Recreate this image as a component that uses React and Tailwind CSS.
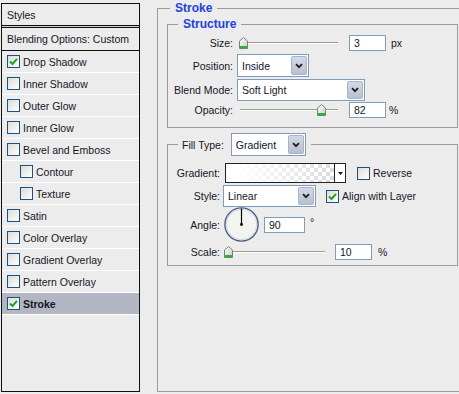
import React from 'react';

const styleItems = [
  { label: 'Drop Shadow', checked: true },
  { label: 'Inner Shadow' },
  { label: 'Outer Glow' },
  { label: 'Inner Glow' },
  { label: 'Bevel and Emboss' },
  { label: 'Contour', indent: true },
  { label: 'Texture', indent: true },
  { label: 'Satin' },
  { label: 'Color Overlay' },
  { label: 'Gradient Overlay' },
  { label: 'Pattern Overlay' },
  { label: 'Stroke', checked: true, active: true },
];

const CheckBox = ({ checked }) => (
  <span className="flex h-[13px] w-[13px] shrink-0 items-center justify-center border border-[#1c5180] bg-gradient-to-br from-[#dcdcd7] to-white">
    {checked && (
      <svg width="9" height="9" viewBox="0 0 9 9">
        <path d="M1 4.5 L3.5 7 L8 1.8" fill="none" stroke="#21a121" strokeWidth="2" />
      </svg>
    )}
  </span>
);

const DropButton = () => (
  <span className="my-[1px] mr-[1px] flex w-[16px] shrink-0 items-center justify-center rounded-[2px] bg-gradient-to-b from-[#d3d9e6] to-[#b7bfd2] border border-[#a9b3c9]">
    <svg width="8" height="6" viewBox="0 0 8 6">
      <path d="M1 1.2 L4 4.2 L7 1.2" fill="none" stroke="#1e1e1e" strokeWidth="1.8" />
    </svg>
  </span>
);

const Select = ({ value, className }) => (
  <div className={`flex border border-[#7f9db9] bg-white ${className}`}>
    <span className="flex flex-1 items-center pl-[4px]">{value}</span>
    <DropButton />
  </div>
);

const TextBox = ({ value, className }) => (
  <div className={`flex h-[16px] items-center border border-[#7f9db9] bg-white pl-[4px] ${className}`}>
    {value}
  </div>
);

const Slider = ({ pos, className }) => (
  <div className={`relative flex h-[16px] items-center ${className}`}>
    <div className="h-[2px] w-full border-t border-[#9b9b8e] bg-white" />
    <svg className="absolute top-[2px]" style={{ left: pos }} width="9" height="12" viewBox="0 0 9 12">
      <defs>
        <linearGradient id="thumb" x1="0" y1="0" x2="1" y2="1">
          <stop offset="0" stopColor="#ffffff" />
          <stop offset="1" stopColor="#c9ccc4" />
        </linearGradient>
      </defs>
      <path d="M0.5 4 L4.5 0.5 L8.5 4 L8.5 11.5 L0.5 11.5 Z" fill="url(#thumb)" stroke="#7c8078" />
      <rect x="1" y="9" width="7" height="2.5" fill="#2fae3a" />
    </svg>
  </div>
);

const Dial = () => (
  <svg width="35" height="35" viewBox="0 0 35 35">
    <circle cx="17.5" cy="17.5" r="16.6" fill="#f3f3ef" stroke="#4d5f88" strokeWidth="1.4" />
    <circle cx="17.5" cy="17.5" r="15.2" fill="none" stroke="#d2d7e0" strokeWidth="1" />
    <line x1="17.5" y1="17.5" x2="17.5" y2="1.5" stroke="#000" strokeWidth="1.2" />
    <circle cx="17.5" cy="17.5" r="1.4" fill="#000" />
  </svg>
);

const App = () => {
  return (
    <div className="flex h-[394px] w-[459px] overflow-hidden bg-[#ececec] font-['Liberation_Sans',Arial,sans-serif] text-[10.5px] leading-[12px] text-[#161626]">
      {/* Styles list */}
      <div className="ml-[1px] mt-[3px] flex h-[389px] w-[139px] shrink-0 flex-col border border-[#111]">
        <div className="flex h-[21px] items-center pl-[5px]">Styles</div>
        <div className="h-[3px] border-y border-[#111] bg-[#cfcfcf]" />
        <div className="flex h-[23px] items-center border-b border-[#111] pl-[5px]">
          Blending Options: Custom
        </div>
        {styleItems.map((item) => (
          <div
            key={item.label}
            className={`flex h-[22px] items-center gap-[3px] border-b border-white ${
              item.indent ? 'pl-[18px]' : 'pl-[5px]'
            } ${item.active ? 'bg-[#b3b6c3] font-bold' : ''}`}
          >
            <CheckBox checked={item.checked} />
            <span>{item.label}</span>
          </div>
        ))}
      </div>

      {/* Stroke settings */}
      <fieldset className="ml-[17px] mt-[2px] h-[390px] w-[302px] shrink-0 border border-r-0 border-[#9c9c9c]">
        <legend className="ml-[12px] px-[5px] text-[12px] font-bold leading-[12px] text-[#2340e0]">Stroke</legend>
        <div className="pl-[9px]">
          {/* Structure */}
          <fieldset className="mt-[4px] w-[291px] border border-[#9c9c9c] pb-[9px]">
            <legend className="ml-[10px] px-[5px] text-[12px] font-bold leading-[12px] text-[#2340e0]">Structure</legend>

            <div className="mt-[5px] flex h-[16px] items-center">
              <span className="w-[65px] text-right">Size:</span>
              <Slider pos="-1px" className="ml-[7px] w-[98px]" />
              <TextBox value="3" className="ml-[11px] w-[37px]" />
              <span className="ml-[5px]">px</span>
            </div>

            <div className="mt-[3px] flex h-[23px] items-center">
              <span className="w-[65px] text-right">Position:</span>
              <Select value="Inside" className="ml-[4px] h-[23px] w-[72px]" />
            </div>

            <div className="mt-[2px] flex h-[22px] items-center">
              <span className="w-[65px] text-right">Blend Mode:</span>
              <Select value="Soft Light" className="ml-[4px] h-[22px] w-[128px]" />
            </div>

            <div className="mt-[1px] flex h-[16px] items-center">
              <span className="w-[65px] text-right">Opacity:</span>
              <Slider pos="77px" className="ml-[7px] w-[98px]" />
              <TextBox value="82" className="ml-[11px] w-[37px]" />
              <span className="ml-[3px]">%</span>
            </div>
          </fieldset>

          {/* Fill type */}
          <fieldset className="mt-[5px] w-[291px] border border-[#9c9c9c] pb-[5px]">
            <legend className="ml-[10px] flex items-center px-[4px] pr-[5px]">
              <span>Fill Type:</span>
              <Select value="Gradient" className="ml-[7px] h-[23px] w-[75px]" />
            </legend>

            <div className="mt-[7px] flex h-[20px] items-center">
              <span className="w-[52px] text-right">Gradient:</span>
              <div className="ml-[5px] flex h-[20px] w-[121px] border border-[#222]">
                <div className="flex-1 bg-[linear-gradient(to_right,#ffffff_10%,rgba(255,255,255,0)),repeating-conic-gradient(#dcdcdc_0_25%,#ffffff_0_50%)] bg-[length:100%_100%,8px_8px]" />
                <div className="flex w-[11px] items-center justify-center border-l border-[#222] bg-white">
                  <svg width="5" height="3" viewBox="0 0 5 3">
                    <path d="M0 0 L5 0 L2.5 3 Z" fill="#111" />
                  </svg>
                </div>
              </div>
              <span className="ml-[11px]"><CheckBox /></span>
              <span className="ml-[3px]">Reverse</span>
            </div>

            <div className="mt-[2px] flex h-[22px] items-center">
              <span className="w-[52px] text-right">Style:</span>
              <Select value="Linear" className="ml-[3px] h-[22px] w-[93px]" />
              <span className="ml-[10px]"><CheckBox checked /></span>
              <span className="ml-[3px]">Align with Layer</span>
            </div>

            <div className="flex h-[35px] items-center">
              <span className="w-[52px] text-right">Angle:</span>
              <span className="ml-[4px] flex"><Dial /></span>
              <TextBox value="90" className="ml-[5px] w-[41px]" />
              <span className="ml-[5px] self-start mt-[9px]">°</span>
            </div>

            <div className="mt-[1px] flex h-[17px] items-center">
              <span className="w-[52px] text-right">Scale:</span>
              <Slider pos="0px" className="ml-[4px] w-[101px]" />
              <TextBox value="10" className="ml-[10px] w-[37px]" />
              <span className="ml-[6px]">%</span>
            </div>
          </fieldset>
        </div>
      </fieldset>
    </div>
  );
};

export default App;
